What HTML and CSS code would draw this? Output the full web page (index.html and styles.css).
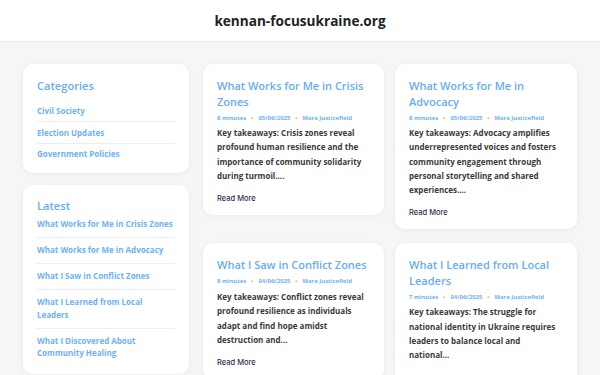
FILE: index.html
```html
<!DOCTYPE html>
<html lang="en">
<head>
<meta charset="utf-8">
<title>kennan-focusukraine.org</title>
<link rel="stylesheet" href="styles.css">
</head>
<body>
<header class="site-header">
  <h1 class="site-title">kennan-focusukraine.org</h1>
</header>
<main class="layout">
  <aside class="sidebar">
    <section class="box box-cats">
      <h2 class="box-title">Categories</h2>
      <ul class="cat-list">
        <li><a href="#">Civil Society</a></li>
        <li><a href="#">Election Updates</a></li>
        <li><a href="#">Government Policies</a></li>
      </ul>
    </section>
    <section class="box box-latest">
      <h2 class="box-title">Latest</h2>
      <ul class="latest-list">
        <li><a href="#">What Works for Me in Crisis Zones</a></li>
        <li><a href="#">What Works for Me in Advocacy</a></li>
        <li><a href="#">What I Saw in Conflict Zones</a></li>
        <li><a href="#">What I Learned from Local Leaders</a></li>
        <li><a href="#">What I Discovered About Community Healing</a></li>
      </ul>
    </section>
  </aside>
  <div class="posts">
    <article class="card">
      <h3 class="card-title">What Works for Me in Crisis Zones</h3>
      <div class="meta"><span>8 minutes</span><span class="dot">•</span><span>05/06/2025</span><span class="dot">•</span><span>Mara Justicefield</span></div>
      <p class="excerpt">Key takeaways: Crisis zones reveal profound human resilience and the importance of community solidarity during turmoil....</p>
      <a class="more" href="#">Read More</a>
    </article>
    <article class="card">
      <h3 class="card-title">What Works for Me in Advocacy</h3>
      <div class="meta"><span>8 minutes</span><span class="dot">•</span><span>05/06/2025</span><span class="dot">•</span><span>Mara Justicefield</span></div>
      <p class="excerpt">Key takeaways: Advocacy amplifies underrepresented voices and fosters community engagement through personal storytelling and shared experiences....</p>
      <a class="more" href="#">Read More</a>
    </article>
    <article class="card">
      <h3 class="card-title">What I Saw in Conflict Zones</h3>
      <div class="meta"><span>8 minutes</span><span class="dot">•</span><span>04/06/2025</span><span class="dot">•</span><span>Mara Justicefield</span></div>
      <p class="excerpt">Key takeaways: Conflict zones reveal profound resilience as individuals adapt and find hope amidst destruction and...</p>
      <a class="more" href="#">Read More</a>
    </article>
    <article class="card">
      <h3 class="card-title">What I Learned from Local Leaders</h3>
      <div class="meta"><span>7 minutes</span><span class="dot">•</span><span>04/06/2025</span><span class="dot">•</span><span>Mara Justicefield</span></div>
      <p class="excerpt">Key takeaways: The struggle for national identity in Ukraine requires leaders to balance local and national...</p>
      <a class="more" href="#">Read More</a>
    </article>
  </div>
</main>
</body>
</html>
```

FILE: styles.css
```css
* { box-sizing: border-box; }
html, body { margin: 0; padding: 0; }
body {
  background: #f5f6f8;
  font-family: "Open Sans", "Noto Sans", sans-serif;
  color: #333;
}
a { text-decoration: none; }
ul { list-style: none; margin: 0; padding: 0; }

.site-header {
  background: #fff;
  height: 42px;
  border-bottom: 1px solid #e9eaec;
  display: flex;
  align-items: center;
  justify-content: center;
}
.site-title {
  margin: 0;
  font-size: 13.6px;
  font-weight: 700;
  color: #222;
}

.layout {
  display: grid;
  grid-template-columns: 166px 1fr;
  gap: 14px;
  padding: 22px 23px 0;
  align-items: start;
}

.sidebar {
  display: flex;
  flex-direction: column;
  gap: 12px;
}
.box, .card {
  background: #fff;
  border-radius: 10px;
  box-shadow: 0 1px 6px rgba(20, 30, 60, 0.05);
}
.box-title {
  margin: 0;
  font-size: 11.1px;
  font-weight: 600;
  color: #66adf6;
  line-height: 18px;
}
.box-cats { padding: 13px 14px 9px; }
.box-cats .box-title { margin-bottom: 5.75px; }
.cat-list li, .latest-list li {
  font-size: 8px;
  font-weight: 700;
}
.cat-list li {
  border-bottom: 1px solid #eceef0;
  padding: 4.25px 0;
  line-height: 12px;
}
.cat-list li:last-child { border-bottom: none; }
.cat-list a, .latest-list a { color: #6fb1f7; }
.box-latest { padding: 12px 14px 14px; }
.latest-list li {
  border-bottom: 1px solid #eceef0;
  padding: 6.25px 0;
  line-height: 12.5px;
}
.latest-list li:first-child { padding-top: 3px; }
.latest-list li:last-child { border-bottom: none; padding-bottom: 0; }

.posts {
  display: grid;
  grid-template-columns: 181px 182px;
  column-gap: 11px;
  row-gap: 14px;
  align-items: start;
}
.card { padding: 14px 14px 11px 14px; }
.card-title {
  margin: 0;
  font-size: 11px;
  font-weight: 600;
  line-height: 15.5px;
  color: #66adf6;
}
.meta {
  display: flex;
  gap: 5px;
  margin-top: 4.5px;
  font-size: 5.9px;
  font-weight: 700;
  color: #6fb1f7;
  line-height: 8px;
}
.meta .dot { color: #f2b84b; }
.excerpt {
  margin: 4.5px 2px 0 0;
  font-size: 8px;
  font-weight: 700;
  line-height: 14.3px;
  color: #3a3a3a;
}
.more {
  display: block;
  margin-top: 11px;
  font-family: "Inter", "Open Sans", sans-serif;
  font-size: 7.5px;
  font-weight: 500;
  color: #2f2f4f;
  line-height: 10px;
}
```
